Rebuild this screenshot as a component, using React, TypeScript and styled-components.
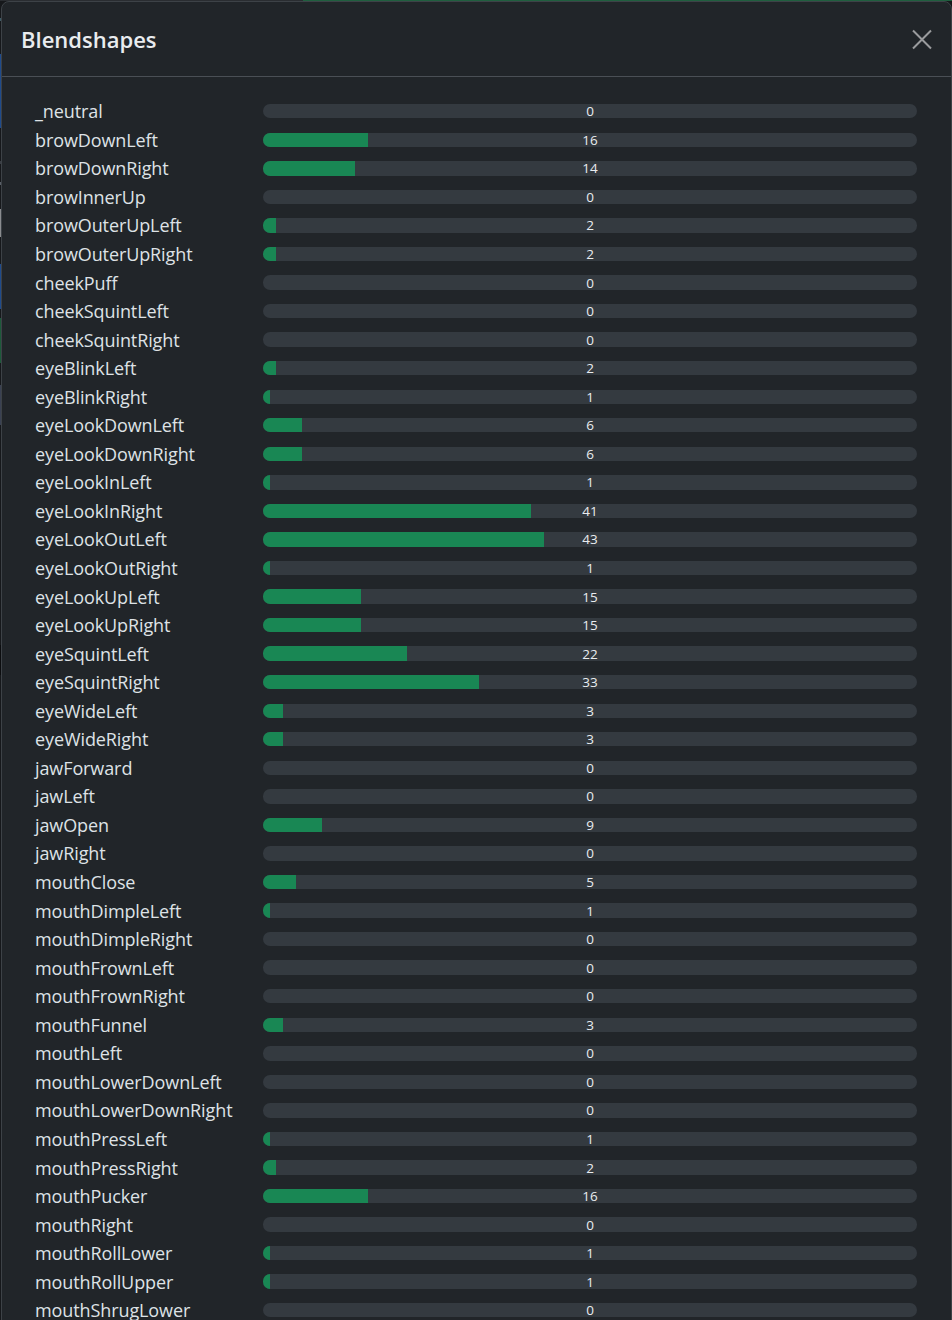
import React from "react";
import styled, { createGlobalStyle } from "styled-components";

const GlobalStyle = createGlobalStyle`
  html, body { margin: 0; padding: 0; background: #16181b; }
  body { font-family: "Open Sans", "Noto Sans", Arial, sans-serif; }
  * { box-sizing: border-box; }
`;

const shapes: [string, number][] = [
  ["_neutral", 0],
  ["browDownLeft", 16],
  ["browDownRight", 14],
  ["browInnerUp", 0],
  ["browOuterUpLeft", 2],
  ["browOuterUpRight", 2],
  ["cheekPuff", 0],
  ["cheekSquintLeft", 0],
  ["cheekSquintRight", 0],
  ["eyeBlinkLeft", 2],
  ["eyeBlinkRight", 1],
  ["eyeLookDownLeft", 6],
  ["eyeLookDownRight", 6],
  ["eyeLookInLeft", 1],
  ["eyeLookInRight", 41],
  ["eyeLookOutLeft", 43],
  ["eyeLookOutRight", 1],
  ["eyeLookUpLeft", 15],
  ["eyeLookUpRight", 15],
  ["eyeSquintLeft", 22],
  ["eyeSquintRight", 33],
  ["eyeWideLeft", 3],
  ["eyeWideRight", 3],
  ["jawForward", 0],
  ["jawLeft", 0],
  ["jawOpen", 9],
  ["jawRight", 0],
  ["mouthClose", 5],
  ["mouthDimpleLeft", 1],
  ["mouthDimpleRight", 0],
  ["mouthFrownLeft", 0],
  ["mouthFrownRight", 0],
  ["mouthFunnel", 3],
  ["mouthLeft", 0],
  ["mouthLowerDownLeft", 0],
  ["mouthLowerDownRight", 0],
  ["mouthPressLeft", 1],
  ["mouthPressRight", 2],
  ["mouthPucker", 16],
  ["mouthRight", 0],
  ["mouthRollLower", 1],
  ["mouthRollUpper", 1],
  ["mouthShrugLower", 0],
];

const Page = styled.div`
  position: relative;
  width: 952px;
  height: 1320px;
  overflow: hidden;
  background: #16181b;
  display: grid;
  grid-template-columns: 1px 1fr;
  grid-template-rows: 1px 1fr;
`;

const TopLine = styled.div`
  grid-column: 1 / 3;
  display: grid;
  grid-template-columns: 303px 1fr;
`;

const LineSeg = styled.div<{ $c: string }>`
  background: ${(p) => p.$c};
`;

const LeftStrip = styled.div`
  display: flex;
  flex-direction: column;
`;

const StripSeg = styled.div<{ $h: number; $c: string }>`
  height: ${(p) => p.$h}px;
  background: ${(p) => p.$c};
  flex-shrink: 0;
`;

const Modal = styled.div`
  position: absolute;
  top: 1px;
  left: 1px;
  width: 951px;
  height: 1330px;
  background: #212529;
  border: 1px solid #3d4247;
  border-radius: 8px 8px 0 0;
  display: flex;
  flex-direction: column;
  color: #dee2e6;
  overflow: hidden;
`;

const Header = styled.div`
  height: 75px;
  flex-shrink: 0;
  display: flex;
  align-items: center;
  justify-content: space-between;
  padding: 0 18px 0 19px;
  border-bottom: 1px solid #4a4f55;
`;

const Title = styled.h5`
  margin: 0;
  font-size: 22px;
  font-weight: 600;
  letter-spacing: 0;
  color: #e9ecef;
  line-height: 1;
`;

const CloseButton = styled.button`
  width: 22px;
  height: 22px;
  padding: 0;
  border: 0;
  background: transparent;
  display: flex;
  align-items: center;
  justify-content: center;
  cursor: pointer;
`;

const Body = styled.div`
  padding: 20px 34px 0 33px;
  display: grid;
  grid-template-columns: 228px 1fr;
  grid-auto-rows: 28.55px;
  align-items: center;
`;

const Label = styled.div`
  font-size: 18px;
  color: #dee2e6;
  white-space: nowrap;
  letter-spacing: -0.1px;
  line-height: 28px;
`;

const BarCell = styled.div`
  position: relative;
  height: 16px;
  display: flex;
  align-items: center;
`;

const Track = styled.div`
  flex: 1;
  height: 14.4px;
  border-radius: 7.2px;
  background: #343a40;
  overflow: hidden;
  display: flex;
`;

const Fill = styled.div`
  height: 100%;
  background: #198754;
`;

const Value = styled.span`
  position: absolute;
  inset: 0;
  display: flex;
  align-items: center;
  justify-content: center;
  font-size: 13.5px;
  color: #e9ecef;
  line-height: 16px;
`;

const strip: [number, string][] = [
  [17, "#16181b"],
  [3, "#3f5c66"],
  [33, "#16181b"],
  [74, "#1f4b8c"],
  [33, "#16181b"],
  [3, "#3a3e44"],
  [18, "#16181b"],
  [3, "#5a6068"],
  [24, "#16181b"],
  [28, "#8a8c8f"],
  [27, "#16181b"],
  [45, "#1f4b8c"],
  [9, "#16181b"],
  [45, "#1d5a3a"],
  [22, "#16181b"],
  [40, "#3a4152"],
  [220, "#16181b"],
  [30, "#0c0d0f"],
];

export default function App() {
  return (
    <>
      <GlobalStyle />
      <Page>
        <TopLine>
          <LineSeg $c="#2a2d31" />
          <LineSeg $c="#1f5e3e" />
        </TopLine>
        <LeftStrip>
          {strip.map(([h, c], i) => (
            <StripSeg key={i} $h={h} $c={c} />
          ))}
        </LeftStrip>
        <Modal role="dialog">
          <Header>
            <Title>Blendshapes</Title>
            <CloseButton aria-label="Close">
              <svg width="22" height="22" viewBox="0 0 22 22">
                <path
                  d="M2 2.5 L20 20.5 M20 2.5 L2 20.5"
                  stroke="#9a9b9d"
                  strokeWidth="2"
                  fill="none"
                />
              </svg>
            </CloseButton>
          </Header>
          <Body>
            {shapes.map(([name, v]) => (
              <React.Fragment key={name}>
                <Label>{name}</Label>
                <BarCell>
                  <Track>
                    <Fill style={{ width: `${v}%` }} />
                  </Track>
                  <Value>{v}</Value>
                </BarCell>
              </React.Fragment>
            ))}
          </Body>
        </Modal>
      </Page>
    </>
  );
}
